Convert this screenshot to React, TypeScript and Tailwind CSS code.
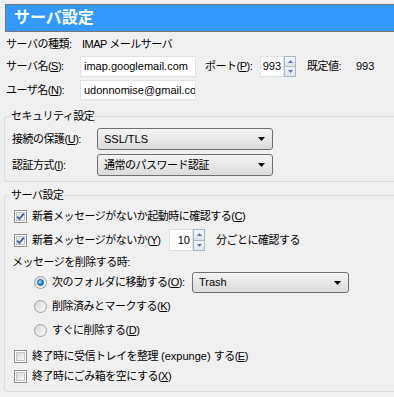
import React from "react";

const font = { fontFamily: '"Liberation Sans", "Noto Sans CJK JP", sans-serif' };

function Key({ k }: { k: string }) {
  return (
    <>
      (<u>{k}</u>)
    </>
  );
}

function Check({ checked }: { checked?: boolean }) {
  return (
    <span className="relative w-[13px] h-[13px] shrink-0 border border-[#8f8f8f] bg-white p-[1px] flex">
      <span className="flex-1 border border-[#c3c7cc] bg-linear-to-br from-[#d6d9dd] to-[#f8f8f8]" />
      {checked && (
        <svg className="absolute left-0 top-0" width="11" height="11" viewBox="0 0 11 11">
          <path d="M2.2 5.6 L4.4 8 L8.8 2.6" stroke="#3d5b94" strokeWidth="1.7" fill="none" />
        </svg>
      )}
    </span>
  );
}

function Radio({ on }: { on?: boolean }) {
  return (
    <span className="w-[13px] h-[13px] shrink-0 rounded-full border border-[#a2a2a2] bg-linear-to-br from-[#d2d5d9] to-[#fbfbfb] flex items-center justify-center">
      {on && (
        <span className="w-[7px] h-[7px] rounded-full border border-[#1c5b95] bg-[radial-gradient(circle_at_35%_35%,#a8e4ff,#2185d6_60%,#0d4f93)]" />
      )}
    </span>
  );
}

function Arrow() {
  return (
    <svg width="7" height="4" viewBox="0 0 7 4" className="shrink-0">
      <path d="M0 0H7L3.5 4Z" fill="#000" />
    </svg>
  );
}

function SpinButtons() {
  return (
    <div className="w-[12px] h-full flex flex-col">
      <div className="flex-1 border border-[#a9b6c4] bg-linear-to-b from-[#f4f6f8] to-[#dde3ea] flex items-center justify-center">
        <svg width="5" height="3" viewBox="0 0 5 3">
          <path d="M0 3H5L2.5 0Z" fill="#5a79a8" />
        </svg>
      </div>
      <div className="flex-1 border border-t-0 border-[#a9b6c4] bg-linear-to-b from-[#f4f6f8] to-[#dde3ea] flex items-center justify-center">
        <svg width="5" height="3" viewBox="0 0 5 3">
          <path d="M0 0H5L2.5 3Z" fill="#5a79a8" />
        </svg>
      </div>
    </div>
  );
}

export default function App() {
  return (
    <div
      className="w-[394px] h-[397px] bg-[#f0f0f0] overflow-hidden text-[11px] text-black tracking-[-0.5px] whitespace-nowrap"
      style={font}
    >
      {/* Header */}
      <div className="pt-[4px] pl-[5px]">
        <div className="h-[28px] bg-[#3399ff] border border-r-0 border-[#777777] flex items-center pl-[8px]">
          <span className="text-white font-bold text-[16px] leading-none tracking-normal">サーバ設定</span>
        </div>
      </div>

      {/* Server info */}
      <div className="pl-[6px]">
        <div className="h-[24px] flex items-center">
          <span className="w-[76px]">サーバの種類:</span>
          <span>IMAP メールサーバ</span>
        </div>
        <div className="h-[21px] flex items-center">
          <span className="w-[74px]">
            サーバ名<Key k="S" />:
          </span>
          <div className="w-[116px] h-full bg-white border border-[#dde2e7] flex items-center pl-[3px] overflow-hidden tracking-normal">
            imap.googlemail.com
          </div>
          <span className="w-[55px] ml-[9px]">
            ポート<Key k="P" />:
          </span>
          <div className="flex h-full">
            <div className="w-[24px] h-full bg-white border border-[#dde2e7] flex items-center justify-end pr-[2px] tracking-normal">
              993
            </div>
            <SpinButtons />
          </div>
          <span className="w-[49px] ml-[11px]">既定値:</span>
          <span className="tracking-normal">993</span>
        </div>
        <div className="h-[20px] mt-[3px] flex items-center">
          <span className="w-[74px]">
            ユーザ名<Key k="N" />:
          </span>
          <div className="w-[116px] h-full bg-white border border-[#dde2e7] flex items-center pl-[3px] overflow-hidden tracking-normal">
            udonnomise@gmail.co
          </div>
        </div>
      </div>

      {/* Security */}
      <fieldset className="ml-[4px] mt-[9px] border border-r-0 border-[#d5dfe5] rounded-l-[3px]">
        <legend className="ml-[5px] px-[1px] leading-[14px]">セキュリティ設定</legend>
        <div className="pl-[7px] pb-[5px]">
          <div className="h-[22px] mt-[5px] flex items-center">
            <span className="w-[85px]">
              接続の保護<Key k="U" />:
            </span>
            <div className="w-[176px] h-full rounded-[3px] border border-[#707070] bg-linear-to-b from-[#f3f3f3] to-[#dcdcdc] flex items-center pl-[6px] pr-[7px]">
              <span className="flex-1 tracking-normal">SSL/TLS</span>
              <Arrow />
            </div>
          </div>
          <div className="h-[22px] mt-[4px] flex items-center">
            <span className="w-[85px]">
              認証方式<Key k="I" />:
            </span>
            <div className="w-[176px] h-full rounded-[3px] border border-[#707070] bg-linear-to-b from-[#f3f3f3] to-[#dcdcdc] flex items-center pl-[6px] pr-[7px]">
              <span className="flex-1">通常のパスワード認証</span>
              <Arrow />
            </div>
          </div>
        </div>
      </fieldset>

      {/* Server settings */}
      <fieldset className="ml-[4px] mt-[6px] border border-r-0 border-[#d5dfe5] rounded-l-[3px]">
        <legend className="ml-[5px] px-[1px] leading-[14px]">サーバ設定</legend>
        <div className="pb-[5px]">
          <div className="h-[20px] mt-[4px] pl-[9px] flex items-center gap-[5px]">
            <Check checked />
            <span>
              新着メッセージがないか起動時に確認する<Key k="C" />
            </span>
          </div>
          <div className="h-[22px] mt-[3px] pl-[9px] flex items-center">
            <Check checked />
            <span className="ml-[5px] w-[137px]">
              新着メッセージがないか<Key k="Y" />
            </span>
            <div className="flex h-full">
              <div className="w-[24px] h-full bg-white border border-[#dde2e7] flex items-center justify-end pr-[2px] tracking-normal">
                10
              </div>
              <SpinButtons />
            </div>
            <span className="ml-[11px]">分ごとに確認する</span>
          </div>
          <div className="h-[16px] mt-[3px] pl-[7px] flex items-center">
            <span>メッセージを削除する時:</span>
          </div>
          <div className="h-[21px] mt-[2px] pl-[29px] flex items-center">
            <Radio on />
            <span className="ml-[5px] w-[140px]">
              次のフォルダに移動する<Key k="O" />:
            </span>
            <div className="w-[157px] h-full rounded-[3px] border border-[#707070] bg-linear-to-b from-[#f3f3f3] to-[#dcdcdc] flex items-center pl-[6px] pr-[7px]">
              <span className="flex-1 tracking-normal">Trash</span>
              <Arrow />
            </div>
          </div>
          <div className="h-[21px] mt-[3px] pl-[29px] flex items-center gap-[5px]">
            <Radio />
            <span>
              削除済みとマークする<Key k="K" />
            </span>
          </div>
          <div className="h-[20px] mt-[3px] pl-[29px] flex items-center gap-[5px]">
            <Radio />
            <span>
              すぐに削除する<Key k="D" />
            </span>
          </div>
          <div className="h-[20px] mt-[6px] pl-[9px] flex items-center gap-[5px]">
            <Check />
            <span>
              終了時に受信トレイを整理<span className="tracking-normal"> (expunge) </span>する<Key k="E" />
            </span>
          </div>
          <div className="h-[20px] pl-[9px] flex items-center gap-[5px]">
            <Check />
            <span>
              終了時にごみ箱を空にする<Key k="X" />
            </span>
          </div>
        </div>
      </fieldset>
    </div>
  );
}
